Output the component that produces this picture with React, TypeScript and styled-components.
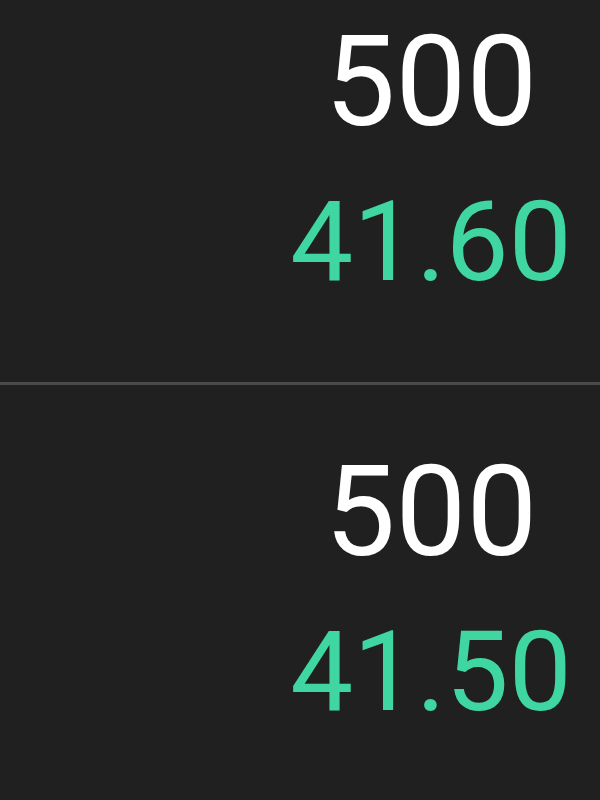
import React from "react";
import styled, { createGlobalStyle } from "styled-components";

const GlobalStyle = createGlobalStyle`
  html, body {
    margin: 0;
    padding: 0;
    background: #202020;
  }
  body {
    width: 600px;
    height: 800px;
    overflow: hidden;
    font-family: Roboto, "Noto Sans", Arial, sans-serif;
  }
`;

const Screen = styled.div`
  width: 600px;
  height: 800px;
  overflow: hidden;
  background: #202020;
`;

const List = styled.div`
  display: flex;
  flex-direction: column;
  margin-top: -45px;
`;

const Row = styled.div`
  display: flex;
  justify-content: flex-end;
  padding: 64px 19px 84px 0;
  border-bottom: 3px solid #4b4b4b;
`;

const Cell = styled.div`
  width: 300px;
  display: flex;
  flex-direction: column;
  align-items: center;
  gap: 41px;
`;

const Qty = styled.div`
  font-size: 126px;
  line-height: 1;
  color: #ffffff;
  font-weight: 400;
`;

const Price = styled.div<{ $tone: "up" | "down" }>`
  font-size: 112px;
  line-height: 1;
  font-weight: 400;
  color: ${(p) => (p.$tone === "up" ? "#3fd6a2" : "#f0506e")};
`;

const rows = [
  { qty: "500", price: "41.60" },
  { qty: "500", price: "41.50" },
];

export default function App() {
  return (
    <Screen>
      <GlobalStyle />
      <List>
        {rows.map((r, i) => (
          <Row key={i}>
            <Cell>
              <Qty>{r.qty}</Qty>
              <Price $tone="up">{r.price}</Price>
            </Cell>
          </Row>
        ))}
      </List>
    </Screen>
  );
}
